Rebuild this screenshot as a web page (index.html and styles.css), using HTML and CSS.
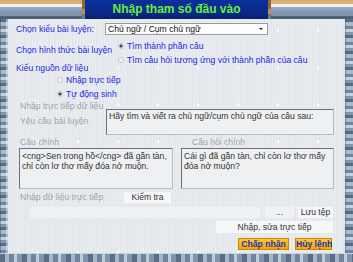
FILE: index.html
```html
<!DOCTYPE html>
<html>
<head>
<meta charset="utf-8">
<link rel="stylesheet" href="styles.css">
</head>
<body>
<div class="frame">
  <div class="header">
    <div class="wood"><span class="post"></span></div>
    <div class="title">Nhập tham số đầu vào</div>
    <div class="wood"><span class="post post-l"></span></div>
  </div>
  <div class="side"></div>
  <div class="main">
    <div class="row r1">
      <span class="lbl blue w97">Chọn kiểu bài luyện:</span>
      <div class="select"><span>Chủ ngữ / Cụm chủ ngữ</span><span class="caret"></span></div>
    </div>
    <div class="row r2">
      <span class="lbl blue w112">Chọn hình thức bài luyện</span>
      <div class="radios">
        <div class="radio on"><i></i>Tìm thành phần câu</div>
        <div class="radio"><i></i>Tìm câu hỏi tương ứng với thành phần của câu</div>
      </div>
    </div>
    <div class="lbl blue ind8 kieu">Kiểu nguồn dữ liệu</div>
    <div class="radios src">
      <div class="radio"><i></i>Nhập trực tiếp</div>
      <div class="radio on"><i></i>Tự động sinh</div>
    </div>
    <div class="lbl gray ind12 ntt">Nhập trực tiếp dữ liệu</div>
    <div class="row r3">
      <span class="lbl gray w86">Yêu cầu bài luyện</span>
      <div class="box yc">Hãy tìm và viết ra chủ ngữ/cụm chủ ngữ của câu sau:</div>
    </div>
    <div class="row r4">
      <div class="col left">
        <span class="lbl gray ind1">Câu chính</span>
        <div class="box big">&lt;cng&gt;Sen trong hồ&lt;/cng&gt; đã gần tàn, chỉ còn lơ thơ mấy đóa nở muộn.</div>
      </div>
      <div class="col right">
        <span class="lbl gray ind11">Câu hỏi chính</span>
        <div class="box big">Cái gì đã gần tàn, chỉ còn lơ thơ mấy đóa nở muộn?</div>
      </div>
    </div>
    <div class="row r5">
      <span class="lbl gray w104">Nhập dữ liệu trực tiếp</span>
      <div class="btn kt">Kiểm tra</div>
    </div>
    <div class="row r6">
      <div class="input"></div>
      <div class="btn dots">...</div>
      <div class="btn luu">Lưu tệp</div>
    </div>
    <div class="row r7">
      <div class="btn nhap">Nhập, sửa trực tiếp</div>
    </div>
    <div class="row r8">
      <div class="btn ok">Chấp nhận</div>
      <div class="btn ok cancel">Hủy lệnh</div>
    </div>
  </div>
  <div class="side side-r"></div>
  <div class="bottom"></div>
</div>
</body>
</html>
```

FILE: styles.css
```css
html, body {
  margin: 0;
  padding: 0;
  background: #6a7f96;
}
.frame {
  width: 353px;
  height: 262px;
  display: grid;
  grid-template-columns: 8px 336px 9px;
  grid-template-rows: 19px 234px 9px;
  font-family: "Liberation Sans", Arial, sans-serif;
  font-size: 8.6px;
  overflow: hidden;
}
.header {
  grid-column: 1 / 4;
  display: flex;
}
.wood {
  flex: 1;
  position: relative;
  background: linear-gradient(180deg,
    #d9a96a 0, #e2b67a 3px, #c9a27a 4px,
    #f4f4f2 4px, #eeeeee 7px,
    #9aaec4 7px, #8197b2 12px, #7a90ab 16px,
    #52647c 16px, #4c5d74 19px);
}
.post {
  position: absolute;
  right: 0;
  top: 0;
  width: 3px;
  height: 19px;
  background: linear-gradient(180deg, #8b6a3c 0 9px, #d08a3a 9px 14px, #6b7d92 14px);
}
.post-l {
  right: auto;
  left: 0;
}
.title {
  width: 183px;
  background: linear-gradient(180deg, #0b2f9c 0, #0a2a8a 60%, #06226f 100%);
  color: #66ee3e;
  font-weight: bold;
  font-size: 12px;
  text-align: center;
  line-height: 19px;
}
.side {
  background:
    linear-gradient(90deg, rgba(40,55,75,.35) 0 1px, transparent 1px 6px, rgba(230,240,248,.5) 6px 8px),
    repeating-linear-gradient(180deg, #596e86 0 3px, #a7b9c9 3px 7px, #70869e 7px 10px, #c3d0db 10px 13px, #8197ad 13px 16px);
}
.side-r {
  background:
    linear-gradient(90deg, #dfe6ec 0 1px, rgba(40,55,75,.3) 1px 2px, transparent 2px),
    repeating-linear-gradient(180deg, #596e86 0 3px, #a7b9c9 3px 7px, #70869e 7px 10px, #c3d0db 10px 13px, #8197ad 13px 16px);
}
.bottom {
  grid-column: 1 / 4;
  background:
    linear-gradient(180deg, #c9d3dc 0 1px, transparent 1px),
    repeating-linear-gradient(90deg, #5a6f87 0 5px, #a6b8c8 5px 9px, #6f859d 9px 14px, #c0ccd7 14px 17px, #8096ac 17px 22px);
}
.main {
  background-color: #e4e8ec;
  background-image:
    radial-gradient(circle at 50% 50%, rgba(255,255,255,.9) 0 1px, transparent 1.5px),
    repeating-linear-gradient(90deg, rgba(255,255,255,.25) 0 1px, transparent 1px 3px);
  background-size: 40px 37px, auto;
  background-position: 10px 30px, 0 0;
  display: flex;
  flex-direction: column;
  padding-top: 4px;
  box-sizing: border-box;
}
.row {
  display: flex;
  align-items: flex-start;
}
.lbl {
  white-space: nowrap;
  line-height: 10px;
  flex: none;
}
.blue { color: #2424e6; }
.gray { color: #9ca3aa; }
.w97 { width: 89px; padding-left: 8px; margin-top: 1px; }
.w112 { width: 102px; padding-left: 8px; margin-top: 4px; }
.w86 { width: 86px; padding-left: 12px; margin-top: 7px; }
.w104 { width: 104px; padding-left: 12px; line-height: 11px; }
.ind8 { padding-left: 8px; }
.ind12 { padding-left: 12px; }
.ind1 { padding-left: 1px; }
.ind11 { padding-left: 11px; }

.select {
  width: 163px;
  height: 12px;
  box-sizing: border-box;
  background: #fdfdfd;
  border: 1px solid #9a9ea4;
  display: flex;
  align-items: center;
  justify-content: space-between;
  padding: 0 4px 0 2px;
  color: #111;
  line-height: 10px;
}
.caret {
  width: 0;
  height: 0;
  border-left: 2px solid transparent;
  border-right: 2px solid transparent;
  border-top: 2px solid #222;
}
.r2 { margin-top: 6px; }
.radios {
  display: flex;
  flex-direction: column;
  gap: 4px;
}
.radio {
  display: flex;
  align-items: center;
  color: #2424e6;
  line-height: 10px;
  white-space: nowrap;
}
.radio i {
  width: 4px;
  height: 4px;
  border-radius: 50%;
  background: #f2f4f6;
  border: 1px solid #c5cbd1;
  margin-right: 3px;
  flex: none;
}
.radio.on i {
  background: radial-gradient(circle, #2a4a6a 0 1.3px, #dfe5ea 1.8px);
}
.kieu { margin-top: -2px; }
.src { padding-left: 49px; margin-top: 2px; }
.ntt { margin-top: 2px; }
.r3 { margin-top: -2px; }
.box {
  box-sizing: border-box;
  background: #eef0f2;
  border: 1px solid #b8bdc2;
  border-top: 1px solid #6e7278;
  border-left: 1px solid #6e7278;
  color: #333;
  line-height: 10px;
  padding: 1px 2px;
}
.yc {
  width: 228px;
  height: 26px;
}
.r4 {
  margin-top: 2px;
  padding-left: 11px;
  gap: 8px;
}
.col {
  display: flex;
  flex-direction: column;
  gap: 1px;
}
.left { width: 154px; }
.right { width: 153px; }
.big {
  height: 41px;
  padding-top: 2px;
}
.r5 { margin-top: 3px; }
.btn {
  box-sizing: border-box;
  height: 11px;
  line-height: 11px;
  background: #f6f7f8;
  color: #333;
  text-align: center;
  white-space: nowrap;
  flex: none;
}
.kt { width: 47px; }
.r6 {
  margin-top: 4px;
  padding-left: 22px;
}
.input {
  width: 230px;
  height: 11px;
  background: #eff1f3;
}
.dots { width: 29px; margin-left: 5px; background: #eff1f3; }
.luu { width: 35px; margin-left: 4px; }
.r7 {
  margin-top: 3px;
  padding-left: 208px;
}
.nhap { width: 117px; height: 12px; line-height: 12px; }
.r8 {
  margin-top: 5px;
  padding-left: 230px;
  gap: 6px;
}
.ok {
  width: 51px;
  height: 12px;
  line-height: 10px;
  background: linear-gradient(180deg, #ffc531 0, #f6a500 100%);
  border: 1px solid #c88900;
  color: #1634c6;
  font-weight: bold;
  font-size: 8.6px;
}
.cancel { width: 37px; }
```
